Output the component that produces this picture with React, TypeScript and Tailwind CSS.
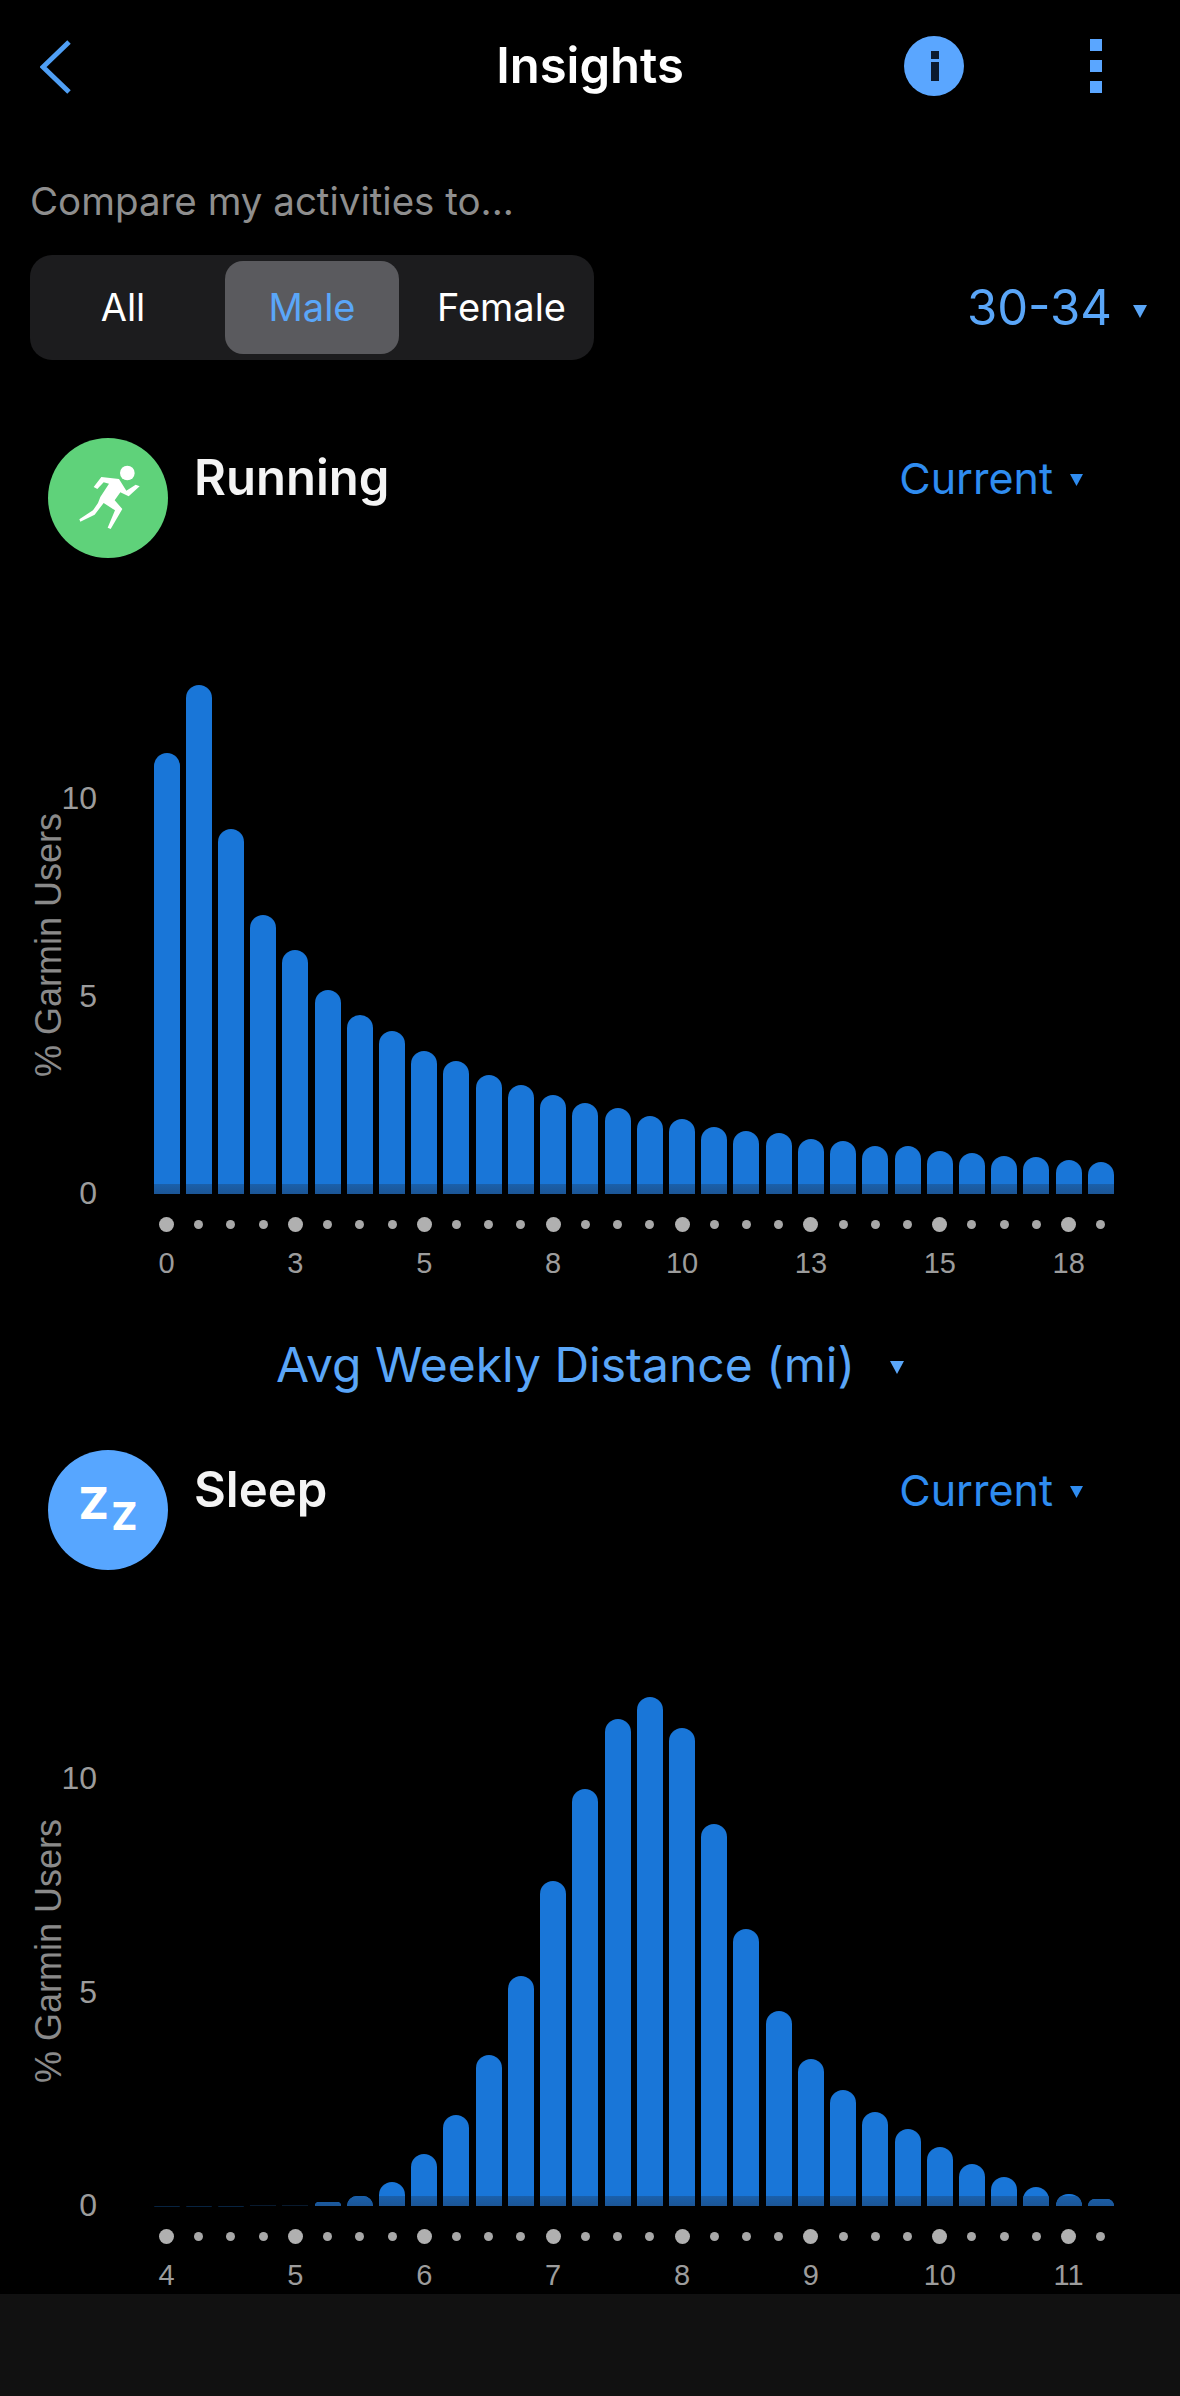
const runningBars = [441, 509, 365, 279, 244, 204, 179, 163, 143, 133, 119, 109, 99, 91, 86, 78, 75, 67, 63, 61, 55, 53, 48, 48, 43, 41, 38, 37, 34, 32];
const sleepBars = [0.5, 0.5, 0.5, 1, 1.5, 4, 10, 24, 52, 91, 151, 230, 325, 417, 487, 509, 478, 382, 277, 195, 147, 116, 94, 77, 59, 42, 29, 19, 12, 7];

const Caret = ({ className }: { className: string }) => (
  <svg viewBox="0 0 14 14" className={className}>
    <polygon points="0,1 14,1 7,14" fill="currentColor" />
  </svg>
);

const RunnerIcon = () => (
  <svg viewBox="55 55 360 360" className="h-[120px] w-[120px]">
    <circle cx="293" cy="160" r="22" fill="#fff" />
    <polygon
      fill="#fff"
      points="215,172 268,178 290,213 318,195 330,200 297,230 272,218 255,242 278,268 243,328 234,324 256,272 222,250 195,285 152,306 149,299 190,272 205,250 212,232 238,192 222,188 203,208 192,202"
    />
  </svg>
);

const SleepIcon = () => (
  <div className="flex h-[120px] w-[120px] items-center justify-center gap-[3px] font-extrabold text-white">
    <span className="mb-[14px] text-[44px] leading-none">Z</span>
    <span className="mt-[12px] text-[38px] leading-none">Z</span>
  </div>
);

type ChartProps = {
  title: string;
  circleClass: string;
  icon: React.ReactElement;
  bars: number[];
  unit: number;
  labels: string[];
  axisTitleClass: string;
};

const Chart = ({ title, circleClass, icon, bars, unit, labels, axisTitleClass }: ChartProps) => (
  <section className="flex flex-col">
    <div className="flex h-[120px] items-start pl-[48px] pr-[97px]">
      <div className={`h-[120px] w-[120px] rounded-full ${circleClass}`}>{icon}</div>
      <h2 className="ml-[26px] mt-[11px] text-[49px] leading-[58px] font-semibold text-[#f4f4f4]">{title}</h2>
      <div className="ml-auto mt-[15px] flex items-center gap-[17px] text-[#2f8cf0]">
        <span className="text-[43px] leading-[50px]">Current</span>
        <Caret className="mt-[3px] h-[13px] w-[13px]" />
      </div>
    </div>

    <div className="flex h-[636px] items-end">
      <div
        className="relative mb-[-17px] flex w-[97px] flex-col items-end justify-between text-[32px] leading-[36px] text-[#9c9c9c] [font-family:'Liberation_Sans',sans-serif]"
        style={{ height: unit * 10 + 36 }}
      >
        <span>10</span>
        <span>5</span>
        <span>0</span>
        <span className={`absolute left-[29px] rotate-180 whitespace-nowrap text-[36px] leading-[40px] text-[#8a8a8a] [writing-mode:vertical-rl] ${axisTitleClass}`}>
          % Garmin Users
        </span>
      </div>
      <div className="ml-[56.5px] flex items-end gap-[6.23px]">
        {bars.map((h, i) => (
          <div
            key={i}
            className="relative w-[26px] overflow-hidden rounded-t-[13px] bg-[#1976d8]"
            style={{ height: h, opacity: h < 2 ? 0.3 : 1 }}
          >
            <div className="absolute bottom-0 left-0 h-[10px] w-full bg-gradient-to-b from-[#1a60ab] to-[#1b5596]" />
          </div>
        ))}
      </div>
    </div>

    <div className="ml-[153.5px] mt-[23px] flex h-[15px] items-center gap-[6.23px]">
      {bars.map((_, i) => (
        <div key={i} className="flex w-[26px] justify-center">
          <div className={i % 4 === 0 ? "h-[15px] w-[15px] rounded-full bg-[#b0b0b0]" : "h-[9px] w-[9px] rounded-full bg-[#a8a8a8]"} />
        </div>
      ))}
    </div>

    <div className="ml-[153.5px] mt-[13px] flex gap-[6.23px] text-[29px] leading-[36px] text-[#9c9c9c] [font-family:'Liberation_Sans',sans-serif]">
      {bars.map((_, i) => (
        <div key={i} className="flex w-[26px] justify-center whitespace-nowrap">
          {i % 4 === 0 ? labels[i / 4] : ""}
        </div>
      ))}
    </div>
  </section>
);

const App = (): React.ReactElement => (
  <div className="flex h-[2396px] w-[1180px] flex-col bg-black [font-family:Inter,sans-serif]">
    <header className="grid h-[132px] grid-cols-[1fr_auto_1fr] items-center">
      <svg viewBox="0 0 32 54" className="mb-[-2px] ml-[40px] h-[54px] w-[32px]">
        <polyline points="29,2 3,27 29,52" fill="none" stroke="#4f9ff5" strokeWidth="5" />
      </svg>
      <h1 className="text-[49px] leading-[56px] font-semibold text-white">Insights</h1>
      <div className="flex items-center justify-end gap-[126px] pr-[78px]">
        <svg viewBox="0 0 60 60" className="h-[60px] w-[60px]">
          <circle cx="30" cy="30" r="30" fill="#5aa6ff" />
          <rect x="27" y="15" width="8" height="8" fill="#0b1a2e" />
          <rect x="27" y="26" width="8" height="19" fill="#0b1a2e" />
        </svg>
        <div className="flex flex-col gap-[9px]">
          <div className="h-[12px] w-[12px] bg-[#5aa6ff]" />
          <div className="h-[12px] w-[12px] bg-[#5aa6ff]" />
          <div className="h-[12px] w-[12px] bg-[#5aa6ff]" />
        </div>
      </div>
    </header>

    <p className="ml-[30px] mt-[46px] text-[38.5px] leading-[46px] text-[#8e8e8e]">Compare my activities to...</p>

    <div className="mt-[31px] flex h-[105px] items-center justify-between pl-[30px] pr-[33px]">
      <div className="flex h-[105px] w-[564px] items-center rounded-[22px] bg-[#1c1c1e] p-[6px] text-[38px]">
        <div className="w-[174px] text-center text-white">All</div>
        <div className="ml-[15px] flex h-[93px] w-[174px] items-center justify-center rounded-[18px] bg-[#5a5a5e] text-[#5aa6f8]">Male</div>
        <div className="flex-1 pl-[16px] text-center text-white">Female</div>
      </div>
      <div className="flex items-center gap-[21px] text-[#5aa6f8]">
        <span className="text-[49px] leading-[60px]">30-34</span>
        <Caret className="mt-[6px] h-[14px] w-[14px]" />
      </div>
    </div>

    <div className="mt-[78px]">
      <Chart
        title="Running"
        circleClass="bg-[#5fd27a]"
        icon={<RunnerIcon />}
        bars={runningBars}
        unit={39.5}
        labels={["0", "3", "5", "8", "10", "13", "15", "18"]}
        axisTitleClass="bottom-[134px]"
      />
    </div>

    <div className="mt-[56px] flex h-[56px] items-center justify-center gap-[35px] text-[#5aa6f8]">
      <span className="text-[48px] leading-[56px]">Avg Weekly Distance (mi)</span>
      <Caret className="mt-[4px] h-[14px] w-[14px]" />
    </div>

    <div className="mt-[57px]">
      <Chart
        title="Sleep"
        circleClass="bg-[#57a6ff]"
        icon={<SleepIcon />}
        bars={sleepBars}
        unit={42.7}
        labels={["4", "5", "6", "7", "8", "9", "10", "11"]}
        axisTitleClass="bottom-[140px]"
      />
    </div>

    <div className="mt-[1px] flex-1 bg-[#111111]" />
  </div>
);

export default App;
